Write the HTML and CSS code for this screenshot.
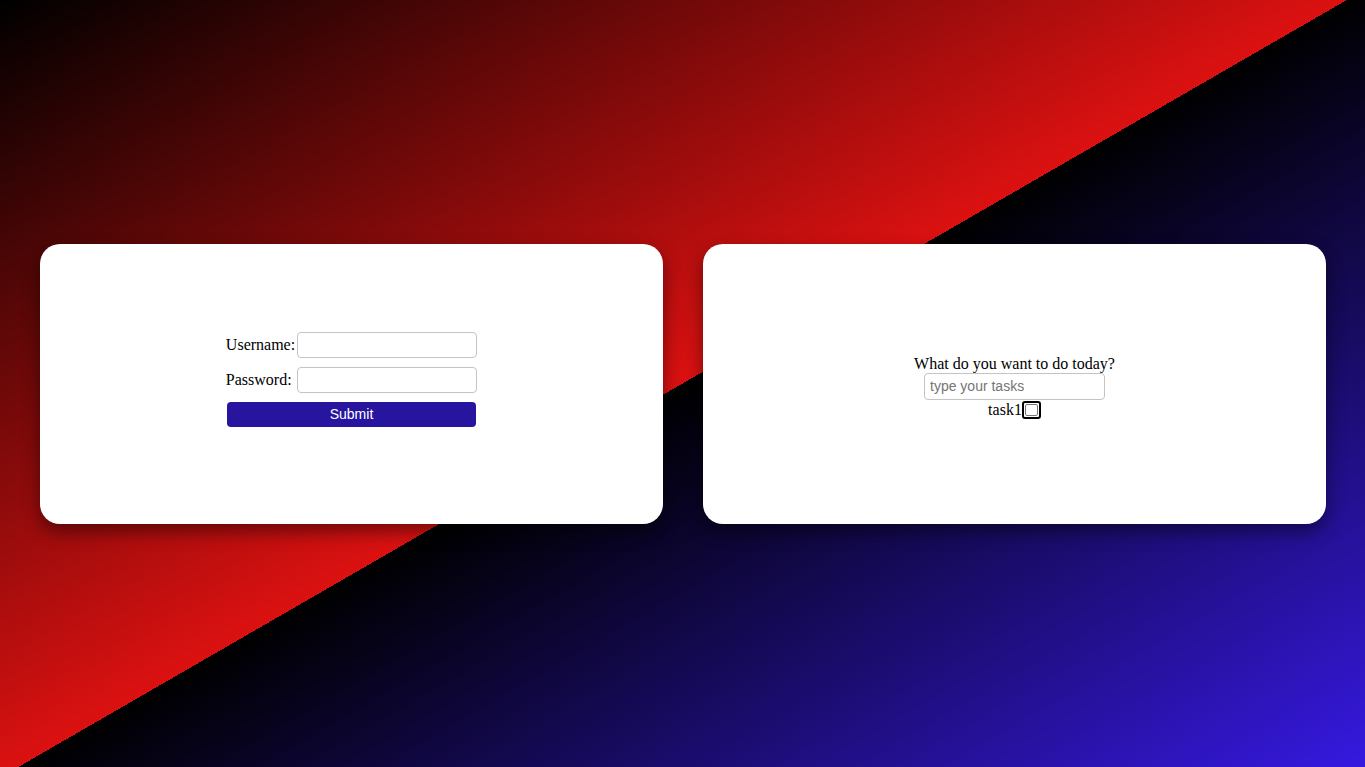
FILE: index.html
```html
<!DOCTYPE html>
<html>
<head>
<meta charset="utf-8">
<link rel="stylesheet" href="styles.css">
</head>
<body>
<main class="stage">
  <section class="card">
    <form class="login">
      <label class="lbl" for="u">Username:</label>
      <input class="field" id="u" type="text">
      <label class="lbl" for="p">Password: </label>
      <input class="field" id="p" type="password">
      <button class="submit" type="button">Submit</button>
    </form>
  </section>
  <section class="card">
    <div class="todo">
      <div class="question">What do you want to do today?</div>
      <input class="field task-input" type="text" placeholder="type your tasks">
      <div class="task"><span>task1</span><span class="box"></span></div>
    </div>
  </section>
</main>
</body>
</html>
```
FILE: styles.css
```css
html, body {
  margin: 0;
  height: 100%;
}
body {
  background: linear-gradient(150deg, #000000 0%, #dc1111 50%, #000000 50%, #3619e0 100%);
  font-family: "Liberation Serif", "Times New Roman", serif;
  font-size: 16px;
  color: #000;
  overflow: hidden;
}
.stage {
  height: 767px;
  display: flex;
  align-items: center;
  gap: 40px;
  padding: 0 39px 0 40px;
  box-sizing: border-box;
}
.card {
  flex: 1;
  height: 280px;
  background: #fff;
  border-radius: 20px;
  box-shadow: 0 8px 18px rgba(0, 0, 0, 0.45);
  display: flex;
  align-items: center;
  justify-content: center;
}
.login {
  display: grid;
  grid-template-columns: auto 180px;
  column-gap: 2px;
  row-gap: 9px;
  align-items: center;
  margin-top: -9px;
}
.lbl {
  line-height: 18px;
  padding-top: 1px;
}
.field {
  box-sizing: border-box;
  width: 180px;
  height: 26px;
  border: 1px solid #c4c4c4;
  border-radius: 4px;
  margin: 0;
  padding: 0 5px;
  font-family: "Liberation Sans", Arial, sans-serif;
  font-size: 14px;
  background: #fff;
}
.submit {
  grid-column: 1 / 3;
  margin: 0 1px;
  height: 25px;
  border: none;
  border-radius: 4px;
  background: #2715a0;
  color: #fff;
  font-family: "Liberation Sans", Arial, sans-serif;
  font-size: 14px;
  padding: 0;
}
.todo {
  display: flex;
  flex-direction: column;
  align-items: center;
  margin-top: 6px;
}
.question {
  line-height: 18px;
}
.task-input {
  width: 181px;
  height: 27px;
}
.task-input::placeholder {
  color: #757575;
}
.task {
  display: flex;
  align-items: center;
  line-height: 18px;
  margin-top: 1px;
}
.box {
  box-sizing: border-box;
  width: 19px;
  height: 18px;
  margin-left: 0;
  border: 2px solid #000;
  border-radius: 3px;
  background: #fff;
  position: relative;
}
.box::after {
  content: "";
  position: absolute;
  left: 1px;
  top: 1px;
  width: 13px;
  height: 12px;
  box-sizing: border-box;
  border: 1px solid #767676;
  border-radius: 2px;
}
```
